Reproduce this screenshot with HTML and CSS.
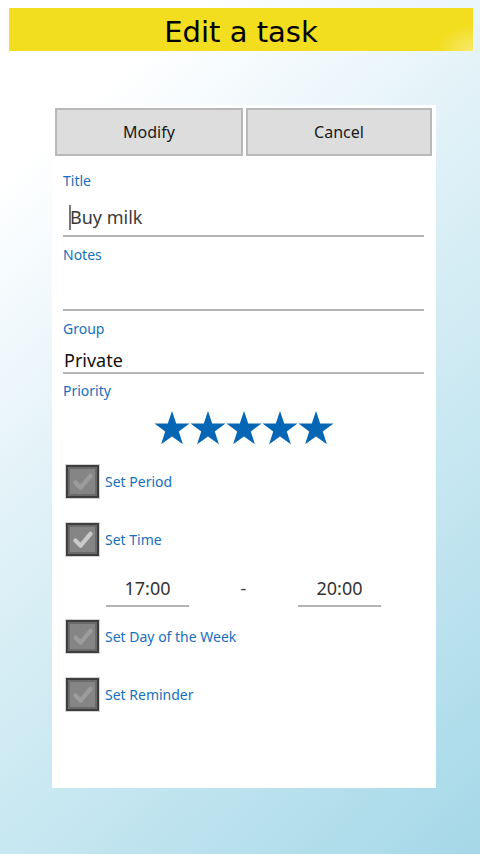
FILE: index.html
```html
<!DOCTYPE html>
<html>
<head>
<meta charset="utf-8">
<link rel="stylesheet" href="styles.css">
</head>
<body>
<div class="screen">
  <header class="header"><h1 class="header-title">Edit a task</h1></header>
  <main class="panel">
    <div class="buttons">
      <button class="btn">Modify</button>
      <button class="btn">Cancel</button>
    </div>
    <div class="form">
      <div class="label label-title">Title</div>
      <div class="field field-title"><span class="cursor"></span>Buy milk</div>
      <div class="label label-notes">Notes</div>
      <div class="field field-notes"></div>
      <div class="label label-group">Group</div>
      <div class="field field-group">Private</div>
      <div class="label label-priority">Priority</div>
      <div class="stars">
        <svg class="star" viewBox="0 0 36 34"><polygon points="18,0 22.2,12.5 35.5,12.5 24.8,20.4 28.9,33.3 18,25.5 7.1,33.3 11.2,20.4 0.5,12.5 13.8,12.5"/></svg>
        <svg class="star" viewBox="0 0 36 34"><polygon points="18,0 22.2,12.5 35.5,12.5 24.8,20.4 28.9,33.3 18,25.5 7.1,33.3 11.2,20.4 0.5,12.5 13.8,12.5"/></svg>
        <svg class="star" viewBox="0 0 36 34"><polygon points="18,0 22.2,12.5 35.5,12.5 24.8,20.4 28.9,33.3 18,25.5 7.1,33.3 11.2,20.4 0.5,12.5 13.8,12.5"/></svg>
        <svg class="star" viewBox="0 0 36 34"><polygon points="18,0 22.2,12.5 35.5,12.5 24.8,20.4 28.9,33.3 18,25.5 7.1,33.3 11.2,20.4 0.5,12.5 13.8,12.5"/></svg>
        <svg class="star" viewBox="0 0 36 34"><polygon points="18,0 22.2,12.5 35.5,12.5 24.8,20.4 28.9,33.3 18,25.5 7.1,33.3 11.2,20.4 0.5,12.5 13.8,12.5"/></svg>
      </div>
      <div class="check-row check-period">
        <span class="checkbox"><svg viewBox="0 0 35 35"><path class="tick" d="M10 18.5 L15.5 24 L26 11.5"/></svg></span>
        <span class="check-label">Set Period</span>
      </div>
      <div class="check-row check-time">
        <span class="checkbox on"><svg viewBox="0 0 35 35"><path class="tick" d="M10 18.5 L15.5 24 L26 11.5"/></svg></span>
        <span class="check-label">Set Time</span>
      </div>
      <div class="time-row">
        <div class="time-field">17:00</div>
        <div class="time-dash">-</div>
        <div class="time-field">20:00</div>
      </div>
      <div class="check-row check-day">
        <span class="checkbox"><svg viewBox="0 0 35 35"><path class="tick" d="M10 18.5 L15.5 24 L26 11.5"/></svg></span>
        <span class="check-label">Set Day of the Week</span>
      </div>
      <div class="check-row check-reminder">
        <span class="checkbox"><svg viewBox="0 0 35 35"><path class="tick" d="M10 18.5 L15.5 24 L26 11.5"/></svg></span>
        <span class="check-label">Set Reminder</span>
      </div>
    </div>
  </main>
</div>
</body>
</html>
```
FILE: styles.css
```css
html, body {
  margin: 0;
  padding: 0;
}
body {
  width: 480px;
  height: 854px;
  overflow: hidden;
  font-family: "Noto Sans", "Open Sans", sans-serif;
}
.screen {
  width: 480px;
  height: 854px;
  box-sizing: border-box;
  padding-top: 8px;
  background: linear-gradient(138deg, #ffffff 0%, #ffffff 14%, #e2f2f8 40%, #c4e6f0 70%, #a5d8e8 100%);
}
.header {
  margin-left: 9px;
  width: 464px;
  height: 43px;
  background:
    radial-gradient(ellipse 36px 26px at 100% 100%, rgba(255,250,200,0.45), rgba(255,250,200,0) 100%),
    #f2dd1f;
  display: flex;
  align-items: center;
  justify-content: center;
}
.header-title {
  margin: 0;
  font-family: "DejaVu Sans", sans-serif;
  font-weight: normal;
  font-size: 29px;
  line-height: 43px;
  color: #000;
  position: relative;
  top: 3px;
  left: 0;
}
.panel {
  margin: 54px 0 0 52px;
  width: 384px;
  height: 683px;
  background: #fff;
  box-sizing: border-box;
  padding: 3px 4px 0 3px;
}
.buttons {
  display: grid;
  grid-template-columns: 188px 186px;
  gap: 3px;
}
.btn {
  height: 48px;
  margin: 0;
  background: #dcdddc;
  border: 2px solid #b8b9b8;
  font-family: "Noto Sans", "Open Sans", sans-serif;
  font-size: 16px;
  color: #1a1a1a;
  padding: 0;
}
.form {
  padding: 0 8px 0 8px;
}
.label {
  font-size: 14px;
  line-height: 18px;
  color: #1670bd;
}
.label-title { margin-top: 16px; }
.label-notes { margin-top: 9px; }
.label-group { margin-top: 9px; }
.label-priority { margin-top: 8px; }
.field {
  border-bottom: 2px solid #b4b4b4;
  font-size: 18px;
  line-height: 24px;
  box-sizing: border-box;
}
.field-title {
  padding: 15px 0 0 7px;
  height: 47px;
  color: #3a3a3a;
  position: relative;
}
.cursor {
  position: absolute;
  left: 6px;
  top: 15px;
  width: 1.5px;
  height: 25px;
  background: #777;
}
.field-notes {
  height: 47px;
}
.field-group {
  margin-top: 10px;
  height: 26px;
  color: #111;
  padding-left: 1px;
}
.stars {
  display: flex;
  justify-content: center;
  margin-top: 11px;
  height: 34px;
}
.star {
  width: 36px;
  height: 34px;
  fill: #0566b6;
}
.check-row {
  display: flex;
  align-items: center;
  height: 35px;
  margin-left: 2px;
}
.check-period { margin-top: 19px; }
.check-time { margin-top: 23px; }
.check-day { margin-top: 12px; }
.check-reminder { margin-top: 23px; }
.checkbox {
  width: 35px;
  height: 35px;
  box-sizing: border-box;
  border: 1px solid #d4d4d4;
  background: #858585;
  box-shadow: inset 0 0 0 2px #3e3e3e, inset 0 0 0 4px #6b6b6b;
  display: block;
}
.checkbox svg {
  display: block;
  width: 33px;
  height: 33px;
}
.tick {
  fill: none;
  stroke: #9c9c9c;
  stroke-width: 4.5;
  stroke-linecap: round;
  stroke-linejoin: round;
}
.checkbox.on .tick {
  stroke: #cacaca;
}
.check-label {
  margin-left: 5px;
  font-size: 14px;
  color: #1670bd;
}
.time-row {
  display: flex;
  align-items: flex-start;
  margin-top: 11px;
  padding-left: 43px;
  padding-top: 7px;
}
.time-field {
  width: 83px;
  text-align: center;
  font-size: 18px;
  line-height: 26px;
  color: #333;
  border-bottom: 2px solid #b4b4b4;
  height: 32px;
  box-sizing: border-box;
}
.time-dash {
  width: 109px;
  text-align: center;
  font-size: 18px;
  line-height: 26px;
  color: #444;
}
```
